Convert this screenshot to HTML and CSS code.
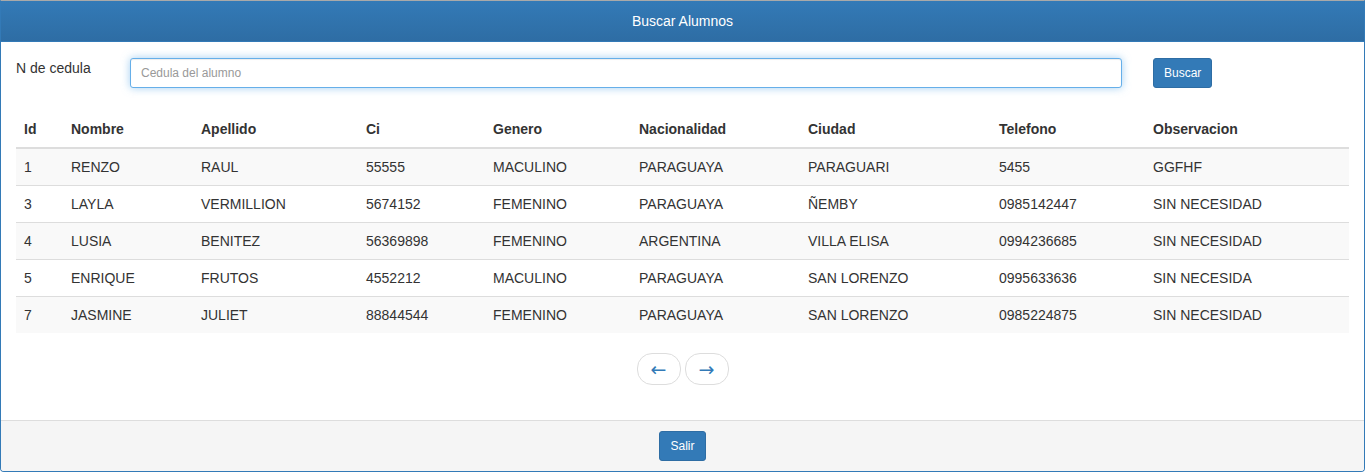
FILE: index.html
```html
<!DOCTYPE html>
<html lang="es">
<head>
<meta charset="utf-8">
<title>Buscar Alumnos</title>
<link rel="stylesheet" href="styles.css">
</head>
<body>
<div class="panel">
  <div class="panel-heading">Buscar Alumnos</div>
  <div class="panel-body">
    <div class="search-row">
      <label class="search-label" for="ci">N de cedula</label>
      <input id="ci" class="search-input" type="text" placeholder="Cedula del alumno">
      <button class="btn btn-primary btn-buscar" type="button">Buscar</button>
    </div>
    <table class="table">
      <thead>
        <tr>
          <th class="c-id">Id</th>
          <th class="c-nom">Nombre</th>
          <th class="c-ape">Apellido</th>
          <th class="c-ci">Ci</th>
          <th class="c-gen">Genero</th>
          <th class="c-nac">Nacionalidad</th>
          <th class="c-ciu">Ciudad</th>
          <th class="c-tel">Telefono</th>
          <th class="c-obs">Observacion</th>
        </tr>
      </thead>
      <tbody>
        <tr><td>1</td><td>RENZO</td><td>RAUL</td><td>55555</td><td>MACULINO</td><td>PARAGUAYA</td><td>PARAGUARI</td><td>5455</td><td>GGFHF</td></tr>
        <tr><td>3</td><td>LAYLA</td><td>VERMILLION</td><td>5674152</td><td>FEMENINO</td><td>PARAGUAYA</td><td>ÑEMBY</td><td>0985142447</td><td>SIN NECESIDAD</td></tr>
        <tr><td>4</td><td>LUSIA</td><td>BENITEZ</td><td>56369898</td><td>FEMENINO</td><td>ARGENTINA</td><td>VILLA ELISA</td><td>0994236685</td><td>SIN NECESIDAD</td></tr>
        <tr><td>5</td><td>ENRIQUE</td><td>FRUTOS</td><td>4552212</td><td>MACULINO</td><td>PARAGUAYA</td><td>SAN LORENZO</td><td>0995633636</td><td>SIN NECESIDA</td></tr>
        <tr><td>7</td><td>JASMINE</td><td>JULIET</td><td>88844544</td><td>FEMENINO</td><td>PARAGUAYA</td><td>SAN LORENZO</td><td>0985224875</td><td>SIN NECESIDAD</td></tr>
      </tbody>
    </table>
    <ul class="pager">
      <li><a href="#">&larr;</a></li>
      <li><a href="#">&rarr;</a></li>
    </ul>
  </div>
  <div class="panel-footer">
    <button class="btn btn-primary" type="button">Salir</button>
  </div>
</div>
</body>
</html>
```
FILE: styles.css
```css
* { box-sizing: border-box; }
html, body { margin: 0; padding: 0; background: #fff; }
body {
  font-family: "Liberation Sans", Arial, sans-serif;
  font-size: 14px;
  line-height: 20px;
  color: #333;
}
.panel {
  border: 1px solid #337ab7;
  border-top-color: #a9a9a9;
  border-radius: 0 0 4px 4px;
  background: #fff;
}
.panel-heading {
  background: linear-gradient(to bottom, #337ab7 0%, #2e6da4 100%);
  color: #fff;
  text-align: center;
  padding: 10px 15px;
  border-bottom: 1px solid #337ab7;
  font-size: 14px;
  line-height: 20px;
}
.panel-body {
  padding: 15px 15px 15px 15px;
}
.search-row {
  display: flex;
  align-items: flex-start;
  height: 30px;
  margin-bottom: 24px;
  padding-top: 1px;
}
.search-label {
  width: 114px;
  flex: none;
  line-height: 20px;
}
.search-input {
  width: 992px;
  flex: none;
  height: 30px;
  padding: 5px 10px;
  font-family: inherit;
  font-size: 12px;
  line-height: 18px;
  color: #555;
  border: 1px solid #66afe9;
  border-radius: 3px;
  outline: 0;
  box-shadow: inset 0 1px 1px rgba(0,0,0,.075), 0 0 8px rgba(102,175,233,.6);
}
.search-input::placeholder { color: #999; }
.btn {
  display: inline-block;
  height: 30px;
  padding: 5px 10px;
  font-family: inherit;
  font-size: 12px;
  line-height: 18px;
  border-radius: 3px;
  cursor: pointer;
}
.btn-primary {
  color: #fff;
  background: #337ab7;
  border: 1px solid #2e6da4;
}
.btn-buscar { margin-left: 31px; }
.table {
  width: 100%;
  border-collapse: collapse;
  table-layout: fixed;
  margin: 0;
}
.table th, .table td {
  padding: 8px;
  text-align: left;
  line-height: 20px;
  white-space: nowrap;
}
.table th {
  font-weight: bold;
  border-bottom: 2px solid #ddd;
}
.table td { border-top: 1px solid #ddd; }
.table tbody tr:nth-child(odd) { background: #f9f9f9; }
.c-id { width: 47px; }
.c-nom { width: 130px; }
.c-ape { width: 165px; }
.c-ci { width: 127px; }
.c-gen { width: 146px; }
.c-nac { width: 169px; }
.c-ciu { width: 191px; }
.c-tel { width: 154px; }
.c-obs { width: 204px; }
.pager {
  list-style: none;
  margin: 20px 0 20px 0;
  padding: 0;
  display: flex;
  justify-content: center;
  gap: 4px;
}
.pager a {
  display: block;
  width: 44px;
  height: 32px;
  padding: 5px 0;
  text-align: center;
  border: 1px solid #ddd;
  border-radius: 15px;
  background: #fff;
  color: #337ab7;
  text-decoration: none;
  line-height: 20px;
  font-family: "DejaVu Sans", sans-serif;
  font-size: 19px;
}
.panel-footer {
  background: #f5f5f5;
  border-top: 1px solid #ddd;
  padding: 10px 15px;
  text-align: center;
  border-radius: 0 0 3px 3px;
}
```
